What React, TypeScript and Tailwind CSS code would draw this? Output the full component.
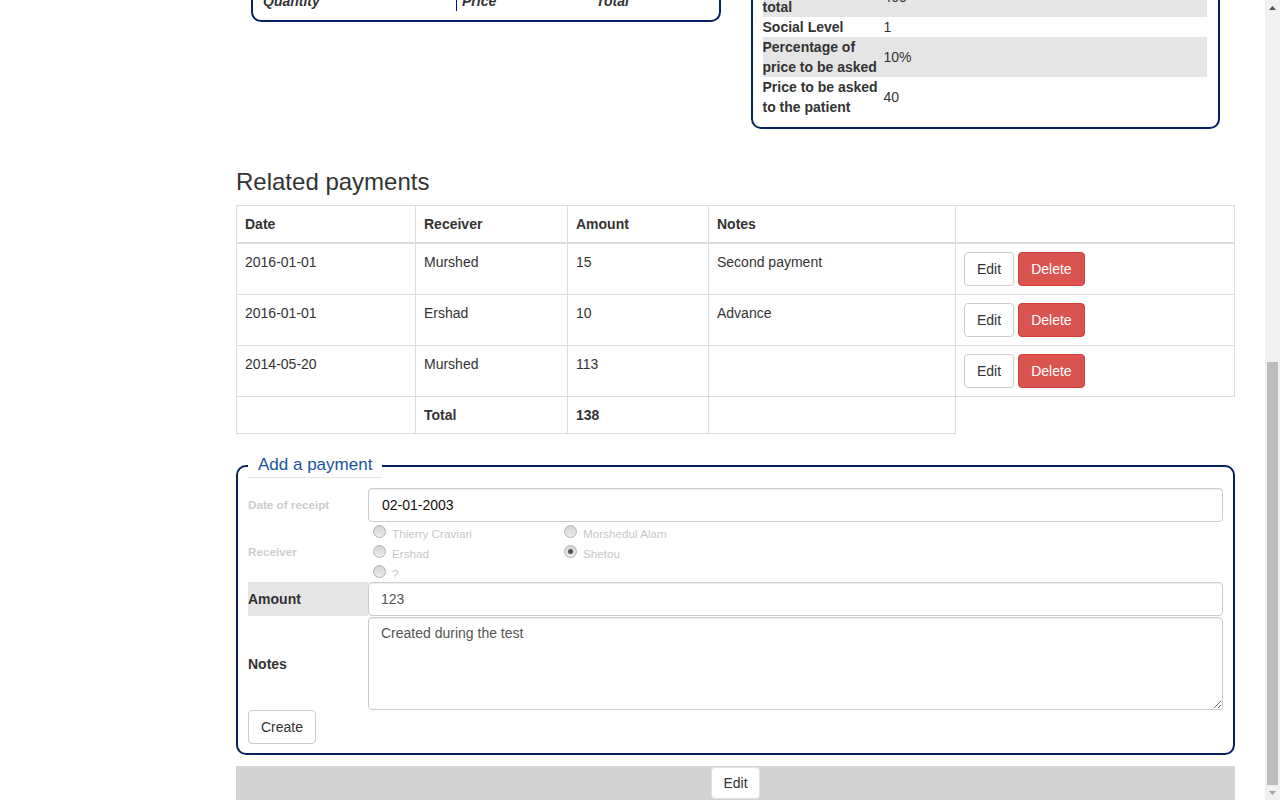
import React from "react";

type Payment = {
  date: string;
  receiver: string;
  amount: string;
  notes: string;
};

const payments: Payment[] = [
  { date: "2016-01-01", receiver: "Murshed", amount: "15", notes: "Second payment" },
  { date: "2016-01-01", receiver: "Ershad", amount: "10", notes: "Advance" },
  { date: "2014-05-20", receiver: "Murshed", amount: "113", notes: "" },
];

const receivers = [
  { name: "Thierry Craviari", checked: false },
  { name: "Morshedul Alam", checked: false },
  { name: "Ershad", checked: false },
  { name: "Shetou", checked: true },
  { name: "?", checked: false },
];

function Radio({ checked }: { checked: boolean }) {
  return (
    <span className="mt-[3px] ml-[5px] mr-[3px] w-[13px] h-[13px] shrink-0 rounded-full border border-[#b3b3b3] bg-gradient-to-b from-[#d4d4d4] to-[#ececec] flex items-center justify-center">
      {checked && <span className="w-[5px] h-[5px] rounded-full bg-[#555]" />}
    </span>
  );
}

function Scrollbar() {
  return (
    <div className="w-[15px] h-[800px] bg-[#f1f1f1] flex flex-col shrink-0">
      <div className="h-[15px] flex items-center justify-center">
        <svg width="7" height="4" viewBox="0 0 7 4">
          <path d="M0 4 L3.5 0 L7 4 Z" fill="#505050" />
        </svg>
      </div>
      <div className="flex-1 flex flex-col">
        <div className="mt-auto mx-[2px] h-[423px] bg-[#bcbcbc]" />
      </div>
      <div className="h-[15px] flex items-center justify-center">
        <svg width="7" height="4" viewBox="0 0 7 4">
          <path d="M0 0 L7 0 L3.5 4 Z" fill="#a3a3a3" />
        </svg>
      </div>
    </div>
  );
}

export default function App() {
  return (
    <div className="flex h-[800px] overflow-hidden bg-white font-['Liberation_Sans',Arial,sans-serif] text-[#333] text-sm leading-5">
      <div className="w-[1265px] h-[800px] overflow-hidden">
        <div className="ml-[236px] w-[999px] -mt-[55px]">
          {/* SUMMARY BOXES */}
          <div className="grid grid-cols-2 items-start">
            <div className="px-[15px]">
              <div className="border-2 border-[#06215f] rounded-[10px] px-[10px] pt-[10px] pb-[9px]">
                <div className="h-[34px] font-bold">Medicines</div>
                <div className="flex italic font-bold">
                  <div className="w-[193px]">Quantity</div>
                  <div className="w-[134px] border-l border-[#0000ff] pl-[5px]">Price</div>
                  <div className="pl-[6px]">Total</div>
                </div>
              </div>
            </div>
            <div className="px-[15px]">
              <div className="border-2 border-[#06215f] rounded-[10px] pl-[10px] pr-[11px] pt-[10px] pb-[10px]">
                <div className="grid grid-cols-[120px_1fr] items-center">
                  <div className="font-bold">Price</div>
                  <div className="pl-px">400</div>
                </div>
                <div className="grid grid-cols-[120px_1fr] items-center bg-[#e5e5e5]">
                  <div className="font-bold">
                    Calculated
                    <br />
                    total
                  </div>
                  <div className="pl-px">400</div>
                </div>
                <div className="grid grid-cols-[120px_1fr] items-center">
                  <div className="font-bold">Social Level</div>
                  <div className="pl-px">1</div>
                </div>
                <div className="grid grid-cols-[120px_1fr] items-center bg-[#e5e5e5]">
                  <div className="font-bold">Percentage of price to be asked</div>
                  <div className="pl-px">10%</div>
                </div>
                <div className="grid grid-cols-[120px_1fr] items-center">
                  <div className="font-bold">Price to be asked to the patient</div>
                  <div className="pl-px">40</div>
                </div>
              </div>
            </div>
          </div>

          {/* RELATED PAYMENTS */}
          <h3 className="mt-[40px] mb-[10px] text-[24px] leading-[26px] font-normal">Related payments</h3>
          <table className="border-collapse table-fixed w-[998px] mb-[19px]">
            <colgroup>
              <col className="w-[179px]" />
              <col className="w-[152px]" />
              <col className="w-[141px]" />
              <col className="w-[247px]" />
              <col className="w-[279px]" />
            </colgroup>
            <thead>
              <tr>
                <th className="border border-[#ddd] border-b-2 p-2 text-left font-bold">Date</th>
                <th className="border border-[#ddd] border-b-2 p-2 text-left font-bold">Receiver</th>
                <th className="border border-[#ddd] border-b-2 p-2 text-left font-bold">Amount</th>
                <th className="border border-[#ddd] border-b-2 p-2 text-left font-bold">Notes</th>
                <th className="border border-[#ddd] border-b-2 p-2" />
              </tr>
            </thead>
            <tbody>
              {payments.map((p, i) => (
                <tr key={i}>
                  <td className="border border-[#ddd] p-2 align-top">{p.date}</td>
                  <td className="border border-[#ddd] p-2 align-top">{p.receiver}</td>
                  <td className="border border-[#ddd] p-2 align-top">{p.amount}</td>
                  <td className="border border-[#ddd] p-2 align-top">{p.notes}</td>
                  <td className="border border-[#ddd] p-2 align-top">
                    <div className="flex gap-[4px]">
                      <button className="h-[34px] px-3 border border-[#ccc] rounded-[4px] bg-white text-[#333]">
                        Edit
                      </button>
                      <button className="h-[34px] px-3 border border-[#d43f3a] rounded-[4px] bg-[#d9534f] text-white">
                        Delete
                      </button>
                    </div>
                  </td>
                </tr>
              ))}
              <tr>
                <td className="border border-[#ddd] p-2" />
                <td className="border border-[#ddd] p-2 font-bold">Total</td>
                <td className="border border-[#ddd] p-2 font-bold">138</td>
                <td className="border border-[#ddd] p-2" />
              </tr>
            </tbody>
          </table>

          {/* ADD A PAYMENT */}
          <fieldset className="border-2 border-[#06215f] rounded-[10px] px-[10px] pt-[10px] pb-[9px]">
            <legend className="px-[10px] border-b border-[#e5e5e5] text-[17px] leading-6 text-[#1a55a0]">
              Add a payment
            </legend>
            <div className="flex h-[34px]">
              <div className="w-[120px] shrink-0 flex items-center text-[11.7px] font-bold text-[#ccc]">
                Date of receipt
              </div>
              <input
                readOnly
                value="02-01-2003"
                className="flex-1 h-[34px] border border-[#ccc] rounded-[4px] pl-[13px] pr-3 text-sm text-[#111] shadow-[inset_0_1px_1px_rgba(0,0,0,0.075)] outline-none"
              />
            </div>
            <div className="flex h-[60px]">
              <div className="w-[120px] shrink-0 flex items-center text-[11.7px] font-bold text-[#ccc]">Receiver</div>
              <div className="grid grid-cols-[191px_191px] auto-rows-[20px]">
                {receivers.map((r) => (
                  <div key={r.name} className="flex items-start">
                    <Radio checked={r.checked} />
                    <span className="pt-[2px] pl-[3px] text-[11.7px] leading-5 text-[#c8c8c8]">{r.name}</span>
                  </div>
                ))}
              </div>
            </div>
            <div className="flex h-[34px]">
              <div className="w-[120px] shrink-0 flex items-center bg-[#e5e5e5] font-bold">Amount</div>
              <input
                readOnly
                value="123"
                className="flex-1 h-[34px] border border-[#ccc] rounded-[4px] px-3 text-sm text-[#555] shadow-[inset_0_1px_1px_rgba(0,0,0,0.075)] outline-none"
              />
            </div>
            <div className="flex mt-px">
              <div className="w-[120px] shrink-0 flex items-center font-bold">Notes</div>
              <textarea
                readOnly
                value="Created during the test"
                className="flex-1 h-[93px] border border-[#ccc] rounded-[4px] px-3 pt-[5px] pb-[6px] text-sm leading-5 text-[#555] shadow-[inset_0_1px_1px_rgba(0,0,0,0.075)] outline-none"
              />
            </div>
            <button className="h-[34px] px-3 border border-[#ccc] rounded-[4px] bg-white text-[#333]">Create</button>
          </fieldset>

          {/* FOOTER BAR */}
          <div className="mt-[11px] h-[34px] bg-[#d3d3d3] flex justify-center pt-px">
            <button className="h-[32px] w-[49px] bg-white border border-[#e2e2e2] rounded-[4px] text-[#333]">Edit</button>
          </div>
        </div>
      </div>
      <Scrollbar />
    </div>
  );
}
